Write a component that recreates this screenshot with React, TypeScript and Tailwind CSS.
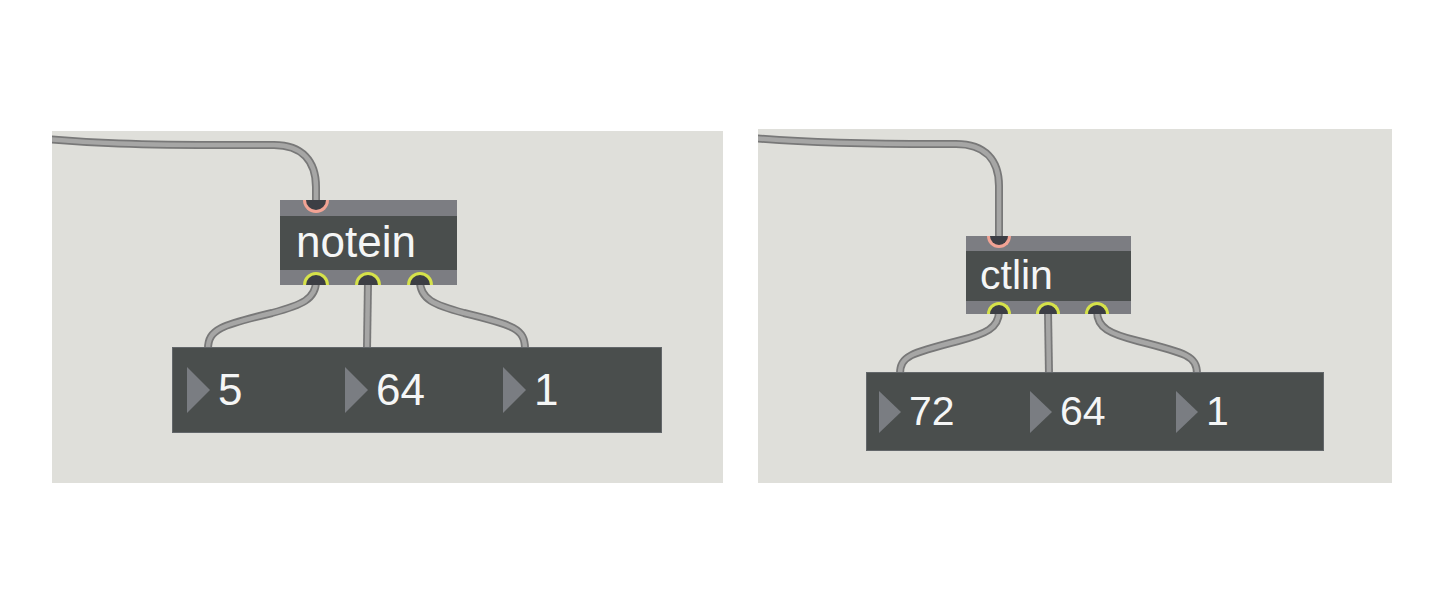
import type { ReactNode } from "react";

// Two Max patch snippets: a MIDI input object feeding a row of number boxes.

const FONT = { fontFamily: '"Liberation Sans", Arial, sans-serif' };

function Cables({ paths }: { paths: string[] }) {
  return (
    <svg className="absolute inset-0 h-full w-full" fill="none">
      {paths.map((d, i) => (
        <g key={i}>
          <path d={d} stroke="#787878" strokeWidth={8} />
          <path d={d} stroke="#a6a6a5" strokeWidth={4.5} />
        </g>
      ))}
    </svg>
  );
}

// inlet hangs down from the top edge, outlet rises from the bottom edge
function Inlet({ className }: { className: string }) {
  return (
    <div
      className={`absolute top-0 rounded-b-full border-[3px] border-t-0 border-[#f2a394] bg-[#3c3e44] ${className}`}
    />
  );
}

function Outlet({ className }: { className: string }) {
  return (
    <div
      className={`absolute bottom-0 rounded-t-full border-[3px] border-b-0 border-[#d6e24a] bg-[#3c3e44] ${className}`}
    />
  );
}

function NumberCell({
  value,
  className,
  triangle,
  text,
}: {
  value: string;
  className: string;
  triangle: [number, number];
  text: string;
}) {
  const [w, h] = triangle;
  return (
    <div className={`flex shrink-0 items-center gap-[8px] ${className}`}>
      <svg width={w} height={h} viewBox={`0 0 ${w} ${h}`}>
        <polygon points={`0,0 ${w},${h / 2} 0,${h}`} fill="#7a7d82" />
      </svg>
      <span className={`leading-none text-[#f5f6f6] ${text}`}>{value}</span>
    </div>
  );
}

function Panel({ className, children }: { className: string; children: ReactNode }) {
  return <div className={`relative shrink-0 overflow-hidden bg-[#dfdfda] ${className}`}>{children}</div>;
}

export default function App() {
  return (
    <div className="flex h-[614px] w-full items-start gap-[35px] bg-white pl-[52px] pt-[129px]" style={FONT}>
      {/* ── notein ───────────────────────────────── */}
      <Panel className="mt-[2px] h-[352px] w-[671px]">
        <Cables
          paths={[
            "M -5 8 C 40 12, 80 14, 180 14 L 222 14 C 250 14, 264 30, 264 56 L 264 75",
            "M 264 150 C 264 168, 250 174, 220 182 C 170 194, 156 198, 156 218",
            "M 316 150 L 315 218",
            "M 368 150 C 368 168, 382 174, 412 182 C 462 194, 473 198, 473 218",
          ]}
        />
        <div className="absolute left-[228px] top-[69px] flex w-[177px] flex-col">
          <div className="relative h-[16px] bg-[#7c7d82]">
            <Inlet className="left-[23px] h-[13px] w-[26px]" />
          </div>
          <div className="flex h-[54px] items-center bg-[#4a4e4d] pl-[16px] pb-[2px] text-[44px] leading-none text-[#f5f6f6]">
            notein
          </div>
          <div className="relative h-[15px] bg-[#7c7d82]">
            <Outlet className="left-[23px] h-[13px] w-[26px]" />
            <Outlet className="left-[75px] h-[13px] w-[26px]" />
            <Outlet className="left-[127px] h-[13px] w-[26px]" />
          </div>
        </div>
        <div className="absolute left-[120px] top-[216px] flex h-[86px] w-[490px] items-center border border-[#63676a] bg-[#4a4e4d] pl-[14px]">
          <NumberCell value="5" className="w-[158px]" triangle={[23, 46]} text="text-[44px]" />
          <NumberCell value="64" className="w-[158px]" triangle={[23, 46]} text="text-[44px]" />
          <NumberCell value="1" className="w-[158px]" triangle={[23, 46]} text="text-[44px]" />
        </div>
      </Panel>

      {/* ── ctlin ────────────────────────────────── */}
      <Panel className="h-[354px] w-[634px]">
        <Cables
          paths={[
            "M -5 9 C 40 13, 90 15, 180 15 L 198 15 C 227 15, 241 31, 241 57 L 241 112",
            "M 241 182 C 241 199, 228 205, 200 212 C 153 224, 142 227, 142 245",
            "M 290 182 L 291 245",
            "M 339 182 C 339 199, 352 205, 380 212 C 428 224, 439 227, 439 245",
          ]}
        />
        <div className="absolute left-[208px] top-[107px] flex w-[165px] flex-col">
          <div className="relative h-[15px] bg-[#7c7d82]">
            <Inlet className="left-[21px] h-[12px] w-[24px]" />
          </div>
          <div className="flex h-[50px] items-center bg-[#4a4e4d] pl-[14px] pb-[2px] text-[41px] leading-none text-[#f5f6f6]">
            ctlin
          </div>
          <div className="relative h-[13px] bg-[#7c7d82]">
            <Outlet className="left-[21px] h-[12px] w-[24px]" />
            <Outlet className="left-[70px] h-[12px] w-[24px]" />
            <Outlet className="left-[119px] h-[12px] w-[24px]" />
          </div>
        </div>
        <div className="absolute left-[108px] top-[243px] flex h-[79px] w-[458px] items-center border border-[#63676a] bg-[#4a4e4d] pl-[12px]">
          <NumberCell value="72" className="w-[151px]" triangle={[22, 42]} text="text-[41px]" />
          <NumberCell value="64" className="w-[146px]" triangle={[22, 42]} text="text-[41px]" />
          <NumberCell value="1" className="w-[146px]" triangle={[22, 42]} text="text-[41px]" />
        </div>
      </Panel>
    </div>
  );
}
